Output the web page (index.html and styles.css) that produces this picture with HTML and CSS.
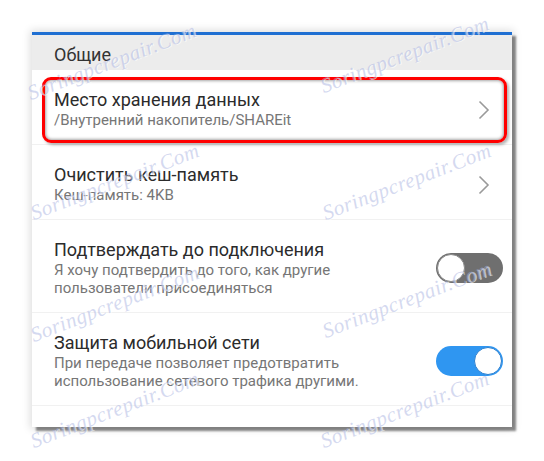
FILE: index.html
```html
<!DOCTYPE html>
<html lang="ru">
<head>
    <meta charset="UTF-8">
    <meta name="viewport" content="width=device-width, initial-scale=1.0">
    <title>Общие настройки</title>
    <link rel="stylesheet" href="styles.css">
</head>
<body>

<div class="panel">
    <div class="topbar"></div>
    <div class="section">Общие</div>

    <div class="row row-marked">
        <div class="text">
            <div class="title">Место хранения данных</div>
            <div class="sub">/Внутренний накопитель/SHAREit</div>
        </div>
        <svg class="chevron" width="12" height="20" viewBox="0 0 12 20">
            <path d="M1.5 1.5 L10 10 L1.5 18.5" fill="none" stroke="#9a9a9a" stroke-width="1.6"/>
        </svg>
        <div class="marker"></div>
    </div>

    <div class="row">
        <div class="text">
            <div class="title">Очистить кеш-память</div>
            <div class="sub">Кеш-память: 4KB</div>
        </div>
        <svg class="chevron" width="12" height="20" viewBox="0 0 12 20">
            <path d="M1.5 1.5 L10 10 L1.5 18.5" fill="none" stroke="#9a9a9a" stroke-width="1.6"/>
        </svg>
    </div>

    <div class="row">
        <div class="text">
            <div class="title">Подтверждать до подключения</div>
            <div class="sub">Я хочу подтвердить до того, как другие<br>пользователи присоединяться</div>
        </div>
        <div class="switch"><div class="knob"></div></div>
    </div>

    <div class="row">
        <div class="text">
            <div class="title">Защита мобильной сети</div>
            <div class="sub">При передаче позволяет предотвратить<br>использование сетевого трафика другими.</div>
        </div>
        <div class="switch on"><div class="knob"></div></div>
    </div>

    <div class="filler"></div>
</div>

<div class="marks">
    <span class="wm wm-1">Soringpcrepair.Com</span>
    <span class="wm wm-2">Soringpcrepair.Com</span>
    <span class="wm wm-3">Soringpcrepair.Com</span>
    <span class="wm wm-4">Soringpcrepair.Com</span>
    <span class="wm wm-5">Soringpcrepair.Com</span>
    <span class="wm wm-6">Soringpcrepair.Com</span>
    <span class="wm wm-7">Soringpcrepair.Com</span>
    <span class="wm wm-8">Soringpcrepair.Com</span>
</div>

</body>
</html>
```

FILE: styles.css
```css
body {
    margin: 0;
    background-color: #ffffff;
    font-family: Roboto, "Noto Sans", sans-serif;
    position: relative;
    height: 461px;
    overflow: hidden;
}
.panel {
    width: 480px;
    margin: 32px 0 0 32px;
    background-color: #ffffff;
    box-shadow: 4px 4px 2px rgba(0, 0, 0, 0.45), 0 0 8px 2px rgba(0, 0, 0, 0.13);
}
.topbar {
    height: 3px;
    background-color: #1f6fd2;
}
.section {
    height: 35px;
    box-sizing: border-box;
    padding: 9px 22px 0;
    background-color: #ececec;
    color: #333333;
    font-size: 18px;
    line-height: 22px;
}
.row {
    position: relative;
    display: flex;
    align-items: center;
    padding: 19px 22px 15px;
    border-bottom: 1px solid #f1f1f1;
}
.text {
    flex: 1;
}
.title {
    color: #2b2b2b;
    font-size: 18px;
    line-height: 22px;
}
.sub {
    color: #767676;
    font-size: 15px;
    line-height: 18px;
}
.chevron {
    margin-top: 2px;
}
.marker {
    position: absolute;
    left: 10px;
    right: 5px;
    top: 7px;
    bottom: 1px;
    border: 3px solid #ff0000;
    border-radius: 9px;
    box-shadow: inset 0 0 3px 1px rgba(0, 0, 0, 0.35), 2px 2px 3px rgba(0, 0, 0, 0.3);
}
.switch {
    position: relative;
    width: 67px;
    height: 30px;
    margin-right: -13px;
    border-radius: 15px;
    background-color: #6f6f6f;
}
.switch .knob {
    position: absolute;
    top: 1px;
    left: 1px;
    width: 26px;
    height: 26px;
    border-radius: 50%;
    background-color: #ffffff;
    border: 1px solid #8a8a8a;
}
.switch.on {
    background-color: #2f96f1;
}
.switch.on .knob {
    left: auto;
    right: 1px;
    border-color: #2a7fd0;
}
.filler {
    height: 21px;
}
.marks {
    position: absolute;
    left: 0;
    top: 0;
    width: 544px;
    height: 461px;
    pointer-events: none;
}
.wm {
    position: absolute;
    transform: translate(-50%, -50%) rotate(-21deg);
    font-family: "Liberation Serif", serif;
    font-style: italic;
    font-size: 21px;
    letter-spacing: 0.5px;
    white-space: nowrap;
    color: rgba(170, 180, 225, 0.5);
    text-shadow: 1px 1px 0 rgba(255, 255, 255, 0.6);
}
.wm-1 { left: 112px; top: 62px; }
.wm-2 { left: 405px; top: 55px; }
.wm-3 { left: 115px; top: 182px; }
.wm-4 { left: 407px; top: 182px; }
.wm-5 { left: 115px; top: 304px; }
.wm-6 { left: 407px; top: 300px; }
.wm-7 { left: 115px; top: 410px; }
.wm-8 { left: 405px; top: 410px; }
```
